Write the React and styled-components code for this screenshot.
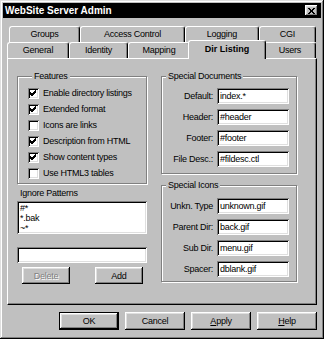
import React from "react";
import styled, { createGlobalStyle, css } from "styled-components";

const Global = createGlobalStyle`
  html, body { margin: 0; padding: 0; background: #c0c0c0; }
  * { box-sizing: border-box; }
  body {
    font-family: "Liberation Sans", Arial, sans-serif;
    font-size: 9px;
    letter-spacing: -0.25px;
    color: #000;
  }
`;

const raised = css`
  box-shadow: inset -1px -1px #000, inset 1px 1px #fff, inset -2px -2px #808080, inset 2px 2px #dfdfdf;
`;
const sunken = css`
  box-shadow: inset 1px 1px #808080, inset -1px -1px #fff, inset 2px 2px #000, inset -2px -2px #dfdfdf;
`;

const Window = styled.div`
  width: 324px;
  height: 339px;
  background: #c0c0c0;
  padding: 3px;
  display: flex;
  flex-direction: column;
  box-shadow: inset -1px -1px #000, inset 1px 1px #dfdfdf, inset -2px -2px #808080, inset 2px 2px #fff;
`;

const TitleBar = styled.div`
  height: 15px;
  background: #000;
  color: #fff;
  display: flex;
  align-items: center;
  justify-content: space-between;
  padding: 0 3px 0 2px;
  font: bold 10px "Liberation Sans", Arial, sans-serif;
  letter-spacing: 0;
`;

const CloseBtn = styled.div`
  width: 13px;
  height: 11px;
  background: #c0c0c0;
  display: flex;
  align-items: center;
  justify-content: center;
  ${raised}
`;

const TabStrip = styled.div`
  display: flex;
  flex-direction: column;
  margin-top: 8px;
`;

const TabRow = styled.div`
  display: flex;
  align-items: flex-end;
  height: 16px;
  margin-left: ${(p) => p.$indent}px;
`;

const Tab = styled.div`
  flex: 0 0 ${(p) => p.$w}px;
  height: 16px;
  background: #c0c0c0;
  border: 1px solid #fff;
  border-right-color: #000;
  border-bottom: none;
  border-radius: 3px 3px 0 0;
  box-shadow: inset -1px 0 #808080;
  display: flex;
  align-items: center;
  justify-content: center;
  padding-bottom: 1px;
  white-space: nowrap;
  ${(p) =>
    p.$active &&
    css`
      flex-basis: ${p.$w + 4}px;
      height: 19px;
      margin: 0 -2px -1px;
      position: relative;
      z-index: 1;
      font-weight: bold;
      letter-spacing: 0;
      padding-bottom: 2px;
    `}
`;

const Panel = styled.div`
  margin: 0 4px;
  height: 247px;
  border-top: 1px solid #fff;
  border-left: 1px solid #fff;
  border-right: 1px solid #000;
  border-bottom: 1px solid #000;
  box-shadow: inset -1px -1px #808080;
  display: grid;
  grid-template-columns: 130px 136px;
  column-gap: 14px;
  align-items: start;
  padding: 17px 0 0 9px;
`;

const Column = styled.div`
  display: flex;
  flex-direction: column;
`;

const Group = styled.div`
  height: ${(p) => p.$h}px;
  margin-top: ${(p) => p.$mt || 0}px;
  border: 1px solid #808080;
  box-shadow: inset 1px 1px #fff, 1px 1px #fff;
  display: flex;
  flex-direction: column;
  padding: 0 ${(p) => p.$pr || 0}px 0 ${(p) => p.$pl || 0}px;
`;

const Legend = styled.div`
  align-self: flex-start;
  height: 12px;
  line-height: 12px;
  margin: -7px 0 ${(p) => p.$after}px ${(p) => p.$ml}px;
  padding: 0 2px;
  background: #c0c0c0;
  white-space: nowrap;
`;

const CheckRow = styled.label`
  height: 16px;
  display: flex;
  align-items: center;
  gap: 4px;
  white-space: nowrap;
`;

const Box = styled.span`
  width: 11px;
  height: 11px;
  background: #fff;
  flex: none;
  display: flex;
  align-items: center;
  justify-content: center;
  ${sunken}
`;

const FieldLabel = styled.div`
  margin-top: 4px;
  height: 11px;
  line-height: 11px;
  padding-left: 3px;
`;

const ListBox = styled.div`
  margin-top: 2px;
  height: 33px;
  background: #fff;
  padding: 2px 3px;
  line-height: 10px;
  overflow: hidden;
  ${sunken}
`;

const TextBox = styled.div`
  height: 16px;
  background: #fff;
  padding: 0 3px;
  line-height: 16px;
  margin-top: ${(p) => p.$mt || 0}px;
  white-space: nowrap;
  overflow: hidden;
  ${sunken}
`;

const SmallButtons = styled.div`
  margin-top: 4px;
  display: flex;
  justify-content: space-between;
  padding: 0 4px 0 5px;
`;

const Button = styled.div`
  width: ${(p) => p.$w}px;
  height: ${(p) => p.$h}px;
  background: #c0c0c0;
  display: flex;
  align-items: center;
  justify-content: center;
  ${raised}
  ${(p) =>
    p.$disabled &&
    css`
      color: #808080;
      text-shadow: 1px 1px #fff;
    `}
  ${(p) =>
    p.$default &&
    css`
      border: 1px solid #000;
    `}
`;

const Fields = styled.div`
  display: grid;
  grid-template-columns: 51px 72px;
  column-gap: 4px;
  row-gap: 5px;
  align-items: center;
`;

const Caption = styled.div`
  text-align: right;
  white-space: nowrap;
`;

const Footer = styled.div`
  margin: 7px 4px 0 0;
  display: flex;
  justify-content: flex-end;
  gap: 6px;
`;

const U = styled.span`
  text-decoration: underline;
`;

const Check = () => (
  <svg width="7" height="7" viewBox="0 0 7 7">
    <path d="M0 2 L2 4 L6 0 M0 3 L2 5 L6 1 M0 4 L2 6 L6 2" stroke="#000" strokeWidth="1" fill="none" shapeRendering="crispEdges" />
  </svg>
);

const features = [
  ["Enable directory listings", true],
  ["Extended format", true],
  ["Icons are links", false],
  ["Description from HTML", true],
  ["Show content types", true],
  ["Use HTML3 tables", false],
];

const docs = [
  ["Default:", "index.*"],
  ["Header:", "#header"],
  ["Footer:", "#footer"],
  ["File Desc.:", "#fildesc.ctl"],
];

const icons = [
  ["Unkn. Type", "unknown.gif"],
  ["Parent Dir:", "back.gif"],
  ["Sub Dir.", "menu.gif"],
  ["Spacer:", "dblank.gif"],
];

const row1 = [
  ["Groups", 71],
  ["Access Control", 105],
  ["Logging", 74],
  ["CGI", 57],
];
const row2 = [
  ["General", 62],
  ["Identity", 59],
  ["Mapping", 62],
  ["Dir Listing", 74, true],
  ["Users", 52],
];

export default function App() {
  return (
    <>
      <Global />
      <Window>
        <TitleBar>
          <span>WebSite Server Admin</span>
          <CloseBtn>
            <svg width="7" height="6" viewBox="0 0 7 6">
              <path d="M0 0 L6 6 M1 0 L7 6 M6 0 L0 6 M7 0 L1 6" stroke="#000" strokeWidth="1" fill="none" />
            </svg>
          </CloseBtn>
        </TitleBar>
        <TabStrip>
          <TabRow $indent={6}>
            {row1.map(([t, w]) => (
              <Tab key={t} $w={w}>{t}</Tab>
            ))}
          </TabRow>
          <TabRow $indent={4}>
            {row2.map(([t, w, a]) => (
              <Tab key={t} $w={w} $active={a}>{t}</Tab>
            ))}
          </TabRow>
        </TabStrip>
        <Panel>
          <Column>
            <Group $h={108} $pl={10}>
              <Legend $ml={4} $after={3}>Features</Legend>
              {features.map(([t, c]) => (
                <CheckRow key={t}>
                  <Box>{c && <Check />}</Box>
                  {t}
                </CheckRow>
              ))}
            </Group>
            <FieldLabel>Ignore Patterns</FieldLabel>
            <ListBox>
              <div>#*</div>
              <div>*.bak</div>
              <div>~*</div>
            </ListBox>
            <TextBox $mt={13} />
            <SmallButtons>
              <Button $w={48} $h={17} $disabled>Delete</Button>
              <Button $w={48} $h={17}>Add</Button>
            </SmallButtons>
          </Column>
          <Column>
            <Group $h={98}>
              <Legend $ml={4} $after={6}>Special Documents</Legend>
              <Fields>
                {docs.map(([l, v]) => (
                  <React.Fragment key={l}>
                    <Caption>{l}</Caption>
                    <TextBox>{v}</TextBox>
                  </React.Fragment>
                ))}
              </Fields>
            </Group>
            <Group $h={97} $mt={11}>
              <Legend $ml={4} $after={7}>Special Icons</Legend>
              <Fields>
                {icons.map(([l, v]) => (
                  <React.Fragment key={l}>
                    <Caption>{l}</Caption>
                    <TextBox>{v}</TextBox>
                  </React.Fragment>
                ))}
              </Fields>
            </Group>
          </Column>
        </Panel>
        <Footer>
          <Button $w={60} $h={18} $default>OK</Button>
          <Button $w={60} $h={18}>Cancel</Button>
          <Button $w={60} $h={18}><span><U>A</U>pply</span></Button>
          <Button $w={60} $h={18}><span><U>H</U>elp</span></Button>
        </Footer>
      </Window>
    </>
  );
}
